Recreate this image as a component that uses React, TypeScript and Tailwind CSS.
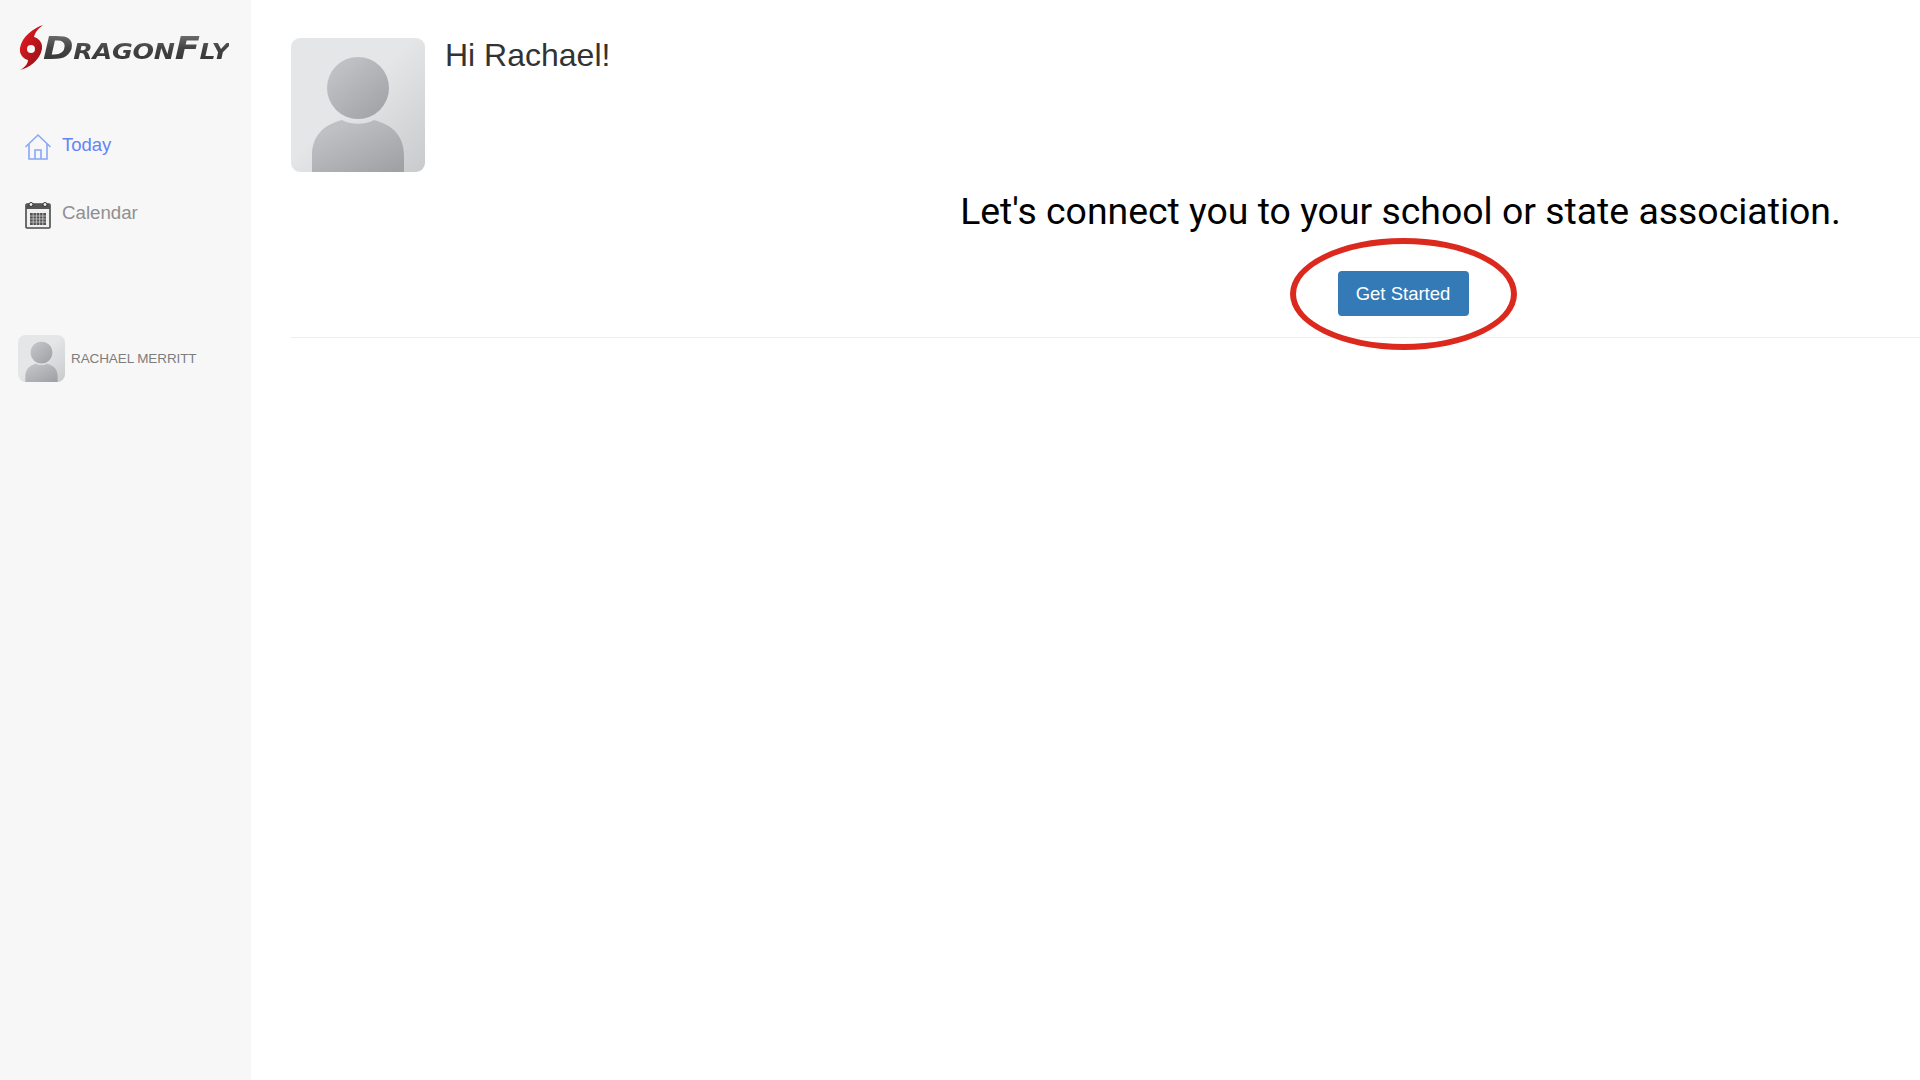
function Avatar({ size, id, rx }: { size: number; id: string; rx: number }) {
  return (
    <svg width={size} height={size} viewBox="0 0 134 134" className="block shrink-0">
      <defs>
        <linearGradient id={id + "bg"} x1="0.45" y1="0.45" x2="1" y2="1">
          <stop offset="0" stopColor="#e5e6e8" />
          <stop offset="1" stopColor="#c9cacc" />
        </linearGradient>
        <linearGradient id={id + "fg"} x1="0.2" y1="0.2" x2="0.9" y2="1">
          <stop offset="0" stopColor="#bfc0c3" />
          <stop offset="1" stopColor="#a0a1a4" />
        </linearGradient>
      </defs>
      <rect width="134" height="134" rx={rx} fill={`url(#${id}bg)`} />
      <circle cx="67" cy="50" r="31" fill={`url(#${id}fg)`} />
      <path d="M21 134V118C21 98 32 87 51 82C60 87 74 87 83 82C102 87 113 98 113 118V134Z" fill={`url(#${id}fg)`} />
    </svg>
  );
}

function Logo() {
  return (
    <div className="flex items-center h-[50px] ml-[19px]">
      <svg width="28" height="46" viewBox="0 0 28 46" className="shrink-0">
        <defs>
          <linearGradient id="swirl" x1="0" y1="0" x2="1" y2="1">
            <stop offset="0" stopColor="#ee1c25" />
            <stop offset="1" stopColor="#8c0f14" />
          </linearGradient>
        </defs>
        <path
          d="M24 0C15 3 3 11 1 23C0 30 5 34 9 35C9 39 5 43 1 45C10 43 21 35 23 24C24 17 19 13 15 12C16 7 20 3 24 0ZM12 20A4 4 0 1 1 12 28A4 4 0 1 1 12 20Z"
          fill="url(#swirl)"
          fillRule="evenodd"
        />
      </svg>
      <span
        className="ml-[-4px] text-[32px] leading-none font-bold italic tracking-[-0.2px] whitespace-nowrap origin-left scale-x-[1.15] bg-gradient-to-b from-[#777777] via-[#444444] to-[#333333] bg-clip-text text-transparent"
        style={{ fontFamily: '"DejaVu Sans", sans-serif', fontVariant: "small-caps" }}
      >
        DragonFly
      </span>
    </div>
  );
}

function HomeIcon() {
  return (
    <svg width="28" height="28" viewBox="0 0 28 28" fill="none" stroke="#8aa7f5" strokeWidth="1.6" className="shrink-0">
      <path d="M1.5 14L14 2L26.5 14" />
      <path d="M5 11V26H23V11" />
      <path d="M11 26V17H17V26" />
    </svg>
  );
}

function CalendarIcon() {
  return (
    <svg width="26" height="28" viewBox="0 0 26 28" fill="none" className="shrink-0">
      <rect x="1" y="3" width="24" height="24" rx="1" stroke="#4a4a4a" strokeWidth="1.6" fill="#f0f0f0" />
      <rect x="1" y="3" width="24" height="5" fill="#555555" />
      <circle cx="6" cy="3.5" r="2" fill="#f0f0f0" stroke="#333333" />
      <circle cx="20" cy="3.5" r="2" fill="#f0f0f0" stroke="#333333" />
      <rect x="5" y="12" width="16" height="12" fill="#555555" />
      <path d="M5 15H21M5 18H21M5 21H21M8.2 12V24M11.4 12V24M14.6 12V24M17.8 12V24" stroke="#d8d8d8" strokeWidth="0.7" />
    </svg>
  );
}

export default function App() {
  return (
    <div className="flex w-full h-screen overflow-hidden bg-white" style={{ fontFamily: '"Liberation Sans", Arial, sans-serif' }}>
      <aside className="w-[251px] shrink-0 bg-[#f7f7f7] pt-[23px]">
        <Logo />
        <nav className="mt-[60px] flex flex-col gap-[40px] pl-[24px]">
          <div className="flex items-center gap-[10px] h-[28px]">
            <HomeIcon />
            <span className="text-[18.5px] leading-none text-[#6384f5] -mt-[3px]">Today</span>
          </div>
          <div className="flex items-center gap-[11px] h-[28px] ml-[1px]">
            <CalendarIcon />
            <span className="text-[18.7px] leading-none text-[#8f8f8f] -mt-[3px]">Calendar</span>
          </div>
        </nav>
        <div className="mt-[106px] ml-[18px] flex items-center gap-[6px]">
          <Avatar size={47} id="small" rx={22} />
          <span className="mt-[2px] text-[13.5px] text-[#7d7d7d] whitespace-nowrap tracking-[-0.1px]">RACHAEL MERRITT</span>
        </div>
      </aside>
      <main className="flex-1 pl-[40px] pt-[38px]">
        <div className="border-b border-[#eeeeee] h-[300px]">
          <div className="flex items-start gap-[20px]">
            <Avatar size={134} id="large" rx={9} />
            <h1 className="text-[32px] leading-[34px] text-[#333333] font-normal">Hi Rachael!</h1>
          </div>
          <div className="ml-[669px] w-[886px] mt-[18px] flex flex-col items-center">
            <p className="text-[37.4px] leading-[42px] text-black whitespace-nowrap -ml-[5px]" style={{ fontFamily: "Roboto, sans-serif" }}>
              Let's connect you to your school or state association.
            </p>
            <div className="relative mt-[39px]">
              <button className="block w-[131px] h-[45px] rounded-[4px] bg-[#337ab7] text-white text-[18.5px]">Get Started</button>
              <div className="absolute left-[-48px] top-[-33px] w-[227px] h-[112px] rounded-[50%] border-[6px] border-[#dc291e]" />
            </div>
          </div>
        </div>
      </main>
    </div>
  );
}
